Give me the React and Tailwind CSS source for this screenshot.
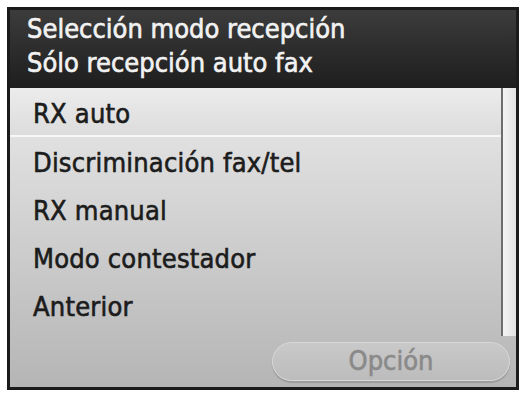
export default function App() {
  const rows = ["RX auto", "Discriminación fax/tel", "RX manual", "Modo contestador", "Anterior"];
  const font = { fontFamily: '"DejaVu Sans Condensed", "DejaVu Sans", sans-serif', WebkitTextStroke: "0.6px currentColor" };
  return (
    <div className="w-[521px] h-[393px] bg-white pt-[7px] pl-[7px]" style={font}>
      <div className="w-[512px] h-[383px] border-[3px] border-[#1b1b1b] flex flex-col overflow-hidden">
        <div className="h-[78px] bg-gradient-to-b from-[#3c3c3c] to-[#1e1e1e] pl-[17px] pt-[2px] text-[#f2f2f2] text-[27px] font-normal leading-[34px]">
          <div>Selección modo recepción</div>
          <div>Sólo recepción auto fax</div>
        </div>
        <div className="flex-1 flex flex-col bg-gradient-to-b from-[#e9e9e9] to-[#b5b5b5]">
          <div className="flex h-[248px]">
            <div className="flex-1 flex flex-col">
              {rows.map((r, i) => (
                <div
                  key={r}
                  className={
                    "h-[48px] shrink-0 flex items-center pl-[23px] pt-[5px] text-[27px] font-normal text-[#1c1c1c] tracking-[0.2px] " +
                    (i === 0 ? "h-[49px] border-b-2 border-[#f7f7f7] bg-gradient-to-b from-[#ececec] to-[#dcdcdc]" : "")
                  }
                >
                  {r}
                </div>
              ))}
            </div>
            <div className="w-[15px] border-l-2 border-[#6d6d6d] bg-gradient-to-r from-[#f4f4f4] to-[#e2e2e2]" />
          </div>
          <div className="flex-1 flex justify-end items-center pr-[6px]">
            <div className="w-[238px] h-[39px] rounded-full border border-[#d8d8d8] bg-gradient-to-b from-[#c9c9c9] to-[#bcbcbc] shadow-[0_2px_1px_#9c9c9c] flex items-center justify-center text-[27px] font-normal text-[#8a8a8a]">
              Opción
            </div>
          </div>
        </div>
      </div>
    </div>
  );
}
